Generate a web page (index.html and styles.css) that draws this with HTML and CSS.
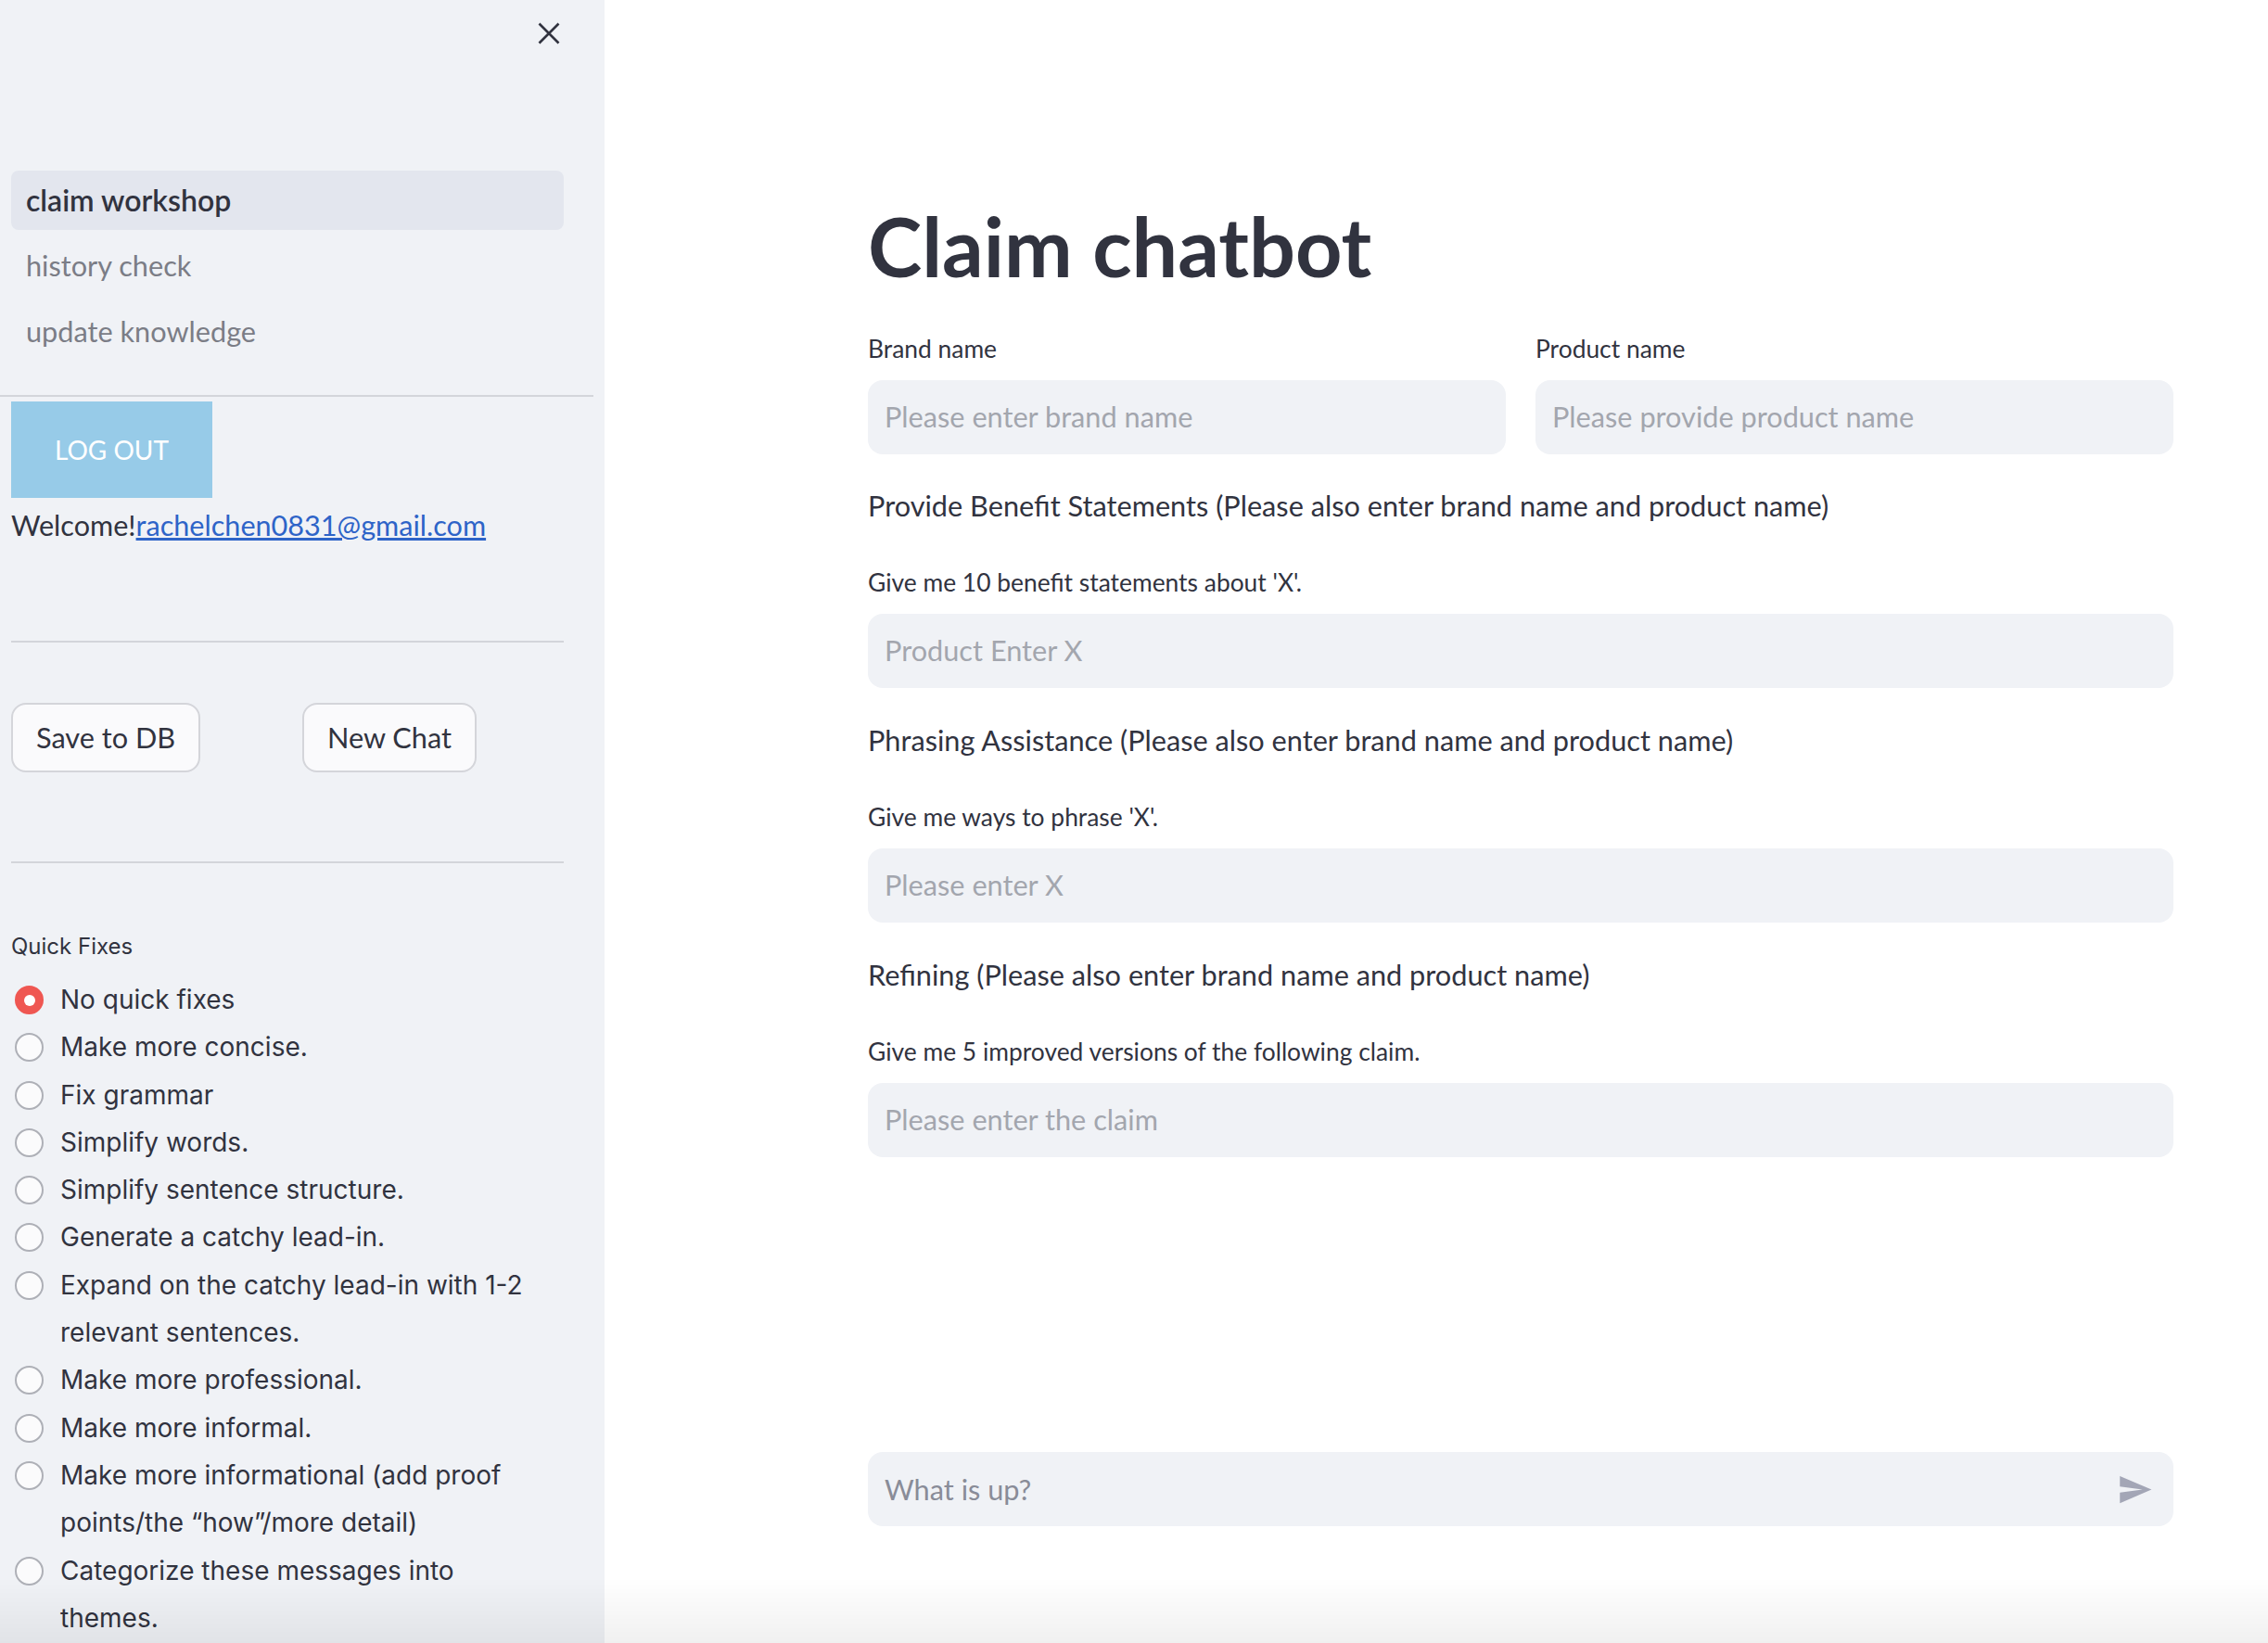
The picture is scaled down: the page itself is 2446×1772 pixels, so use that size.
FILE: index.html
```html
<!DOCTYPE html>
<html lang="en">
<head>
<meta charset="utf-8">
<title>Claim chatbot</title>
<link rel="stylesheet" href="styles.css">
</head>
<body>
<div class="app">
  <aside class="sidebar">
    <div class="sb-top">
      <button class="close" aria-label="Close sidebar">
        <svg width="24" height="24" viewBox="0 0 24 24"><path d="M1.5 1.5 L22.5 22.5 M22.5 1.5 L1.5 22.5" stroke="#31333f" stroke-width="2.6" fill="none"/></svg>
      </button>
    </div>
    <nav class="nav">
      <a class="nav-item active" href="#">claim workshop</a>
      <a class="nav-item" href="#">history check</a>
      <a class="nav-item" href="#">update knowledge</a>
    </nav>
    <hr class="rule-full">
    <div class="sb-body">
      <button class="logout">LOG OUT</button>
      <p class="welcome">Welcome!<a href="#">rachelchen0831@gmail.com</a></p>
      <hr class="rule rule-2">
      <div class="btn-row">
        <div class="col"><button class="btn">Save to DB</button></div>
        <div class="col"><button class="btn">New Chat</button></div>
      </div>
      <hr class="rule rule-3">
      <div class="radio-group">
        <div class="radio-title">Quick Fixes</div>
        <div class="radios">
          <label class="radio checked"><span class="circle"></span><span class="txt">No quick fixes</span></label>
          <label class="radio"><span class="circle"></span><span class="txt">Make more concise.</span></label>
          <label class="radio"><span class="circle"></span><span class="txt">Fix grammar</span></label>
          <label class="radio"><span class="circle"></span><span class="txt">Simplify words.</span></label>
          <label class="radio"><span class="circle"></span><span class="txt">Simplify sentence structure.</span></label>
          <label class="radio"><span class="circle"></span><span class="txt">Generate a catchy lead-in.</span></label>
          <label class="radio"><span class="circle"></span><span class="txt">Expand on the catchy lead-in with 1-2 relevant sentences.</span></label>
          <label class="radio"><span class="circle"></span><span class="txt">Make more professional.</span></label>
          <label class="radio"><span class="circle"></span><span class="txt">Make more informal.</span></label>
          <label class="radio"><span class="circle"></span><span class="txt">Make more informational (add proof points/the “how”/more detail)</span></label>
          <label class="radio"><span class="circle"></span><span class="txt">Categorize these messages into themes.</span></label>
        </div>
      </div>
    </div>
  </aside>
  <main class="main">
    <h1 class="title">Claim chatbot</h1>
    <div class="fields">
      <div class="field">
        <label class="field-label">Brand name</label>
        <input class="input" type="text" placeholder="Please enter brand name">
      </div>
      <div class="field">
        <label class="field-label">Product name</label>
        <input class="input" type="text" placeholder="Please provide product name">
      </div>
    </div>
    <section class="block">
      <p class="heading">Provide Benefit Statements (Please also enter brand name and product name)</p>
      <label class="field-label">Give me 10 benefit statements about 'X'.</label>
      <input class="input" type="text" placeholder="Product Enter X">
    </section>
    <section class="block">
      <p class="heading">Phrasing Assistance (Please also enter brand name and product name)</p>
      <label class="field-label">Give me ways to phrase 'X'.</label>
      <input class="input" type="text" placeholder="Please enter X">
    </section>
    <section class="block">
      <p class="heading">Refining (Please also enter brand name and product name)</p>
      <label class="field-label">Give me 5 improved versions of the following claim.</label>
      <input class="input" type="text" placeholder="Please enter the claim">
    </section>
    <div class="chat">
      <div class="chat-box">
        <input class="chat-input" type="text" placeholder="What is up?">
        <svg class="send" width="39" height="39" viewBox="0 0 24 24"><path d="M2.01 21L23 12 2.01 3 2 10l15 2-15 2z" fill="#a3a6b6"/></svg>
      </div>
    </div>
  </main>
</div>
<div class="fade"></div>
</body>
</html>
```
FILE: styles.css
```css
* { box-sizing: border-box; }
html, body {
  margin: 0;
  padding: 0;
  width: 2446px;
  height: 1772px;
  overflow: hidden;
}
body {
  font-family: Lato, "Liberation Sans", sans-serif;
  color: #31333f;
  background: #ffffff;
}
.app {
  display: flex;
  height: 1772px;
}

/* Sidebar */
.sidebar {
  width: 652px;
  flex: none;
  background: #f0f2f6;
  display: flex;
  flex-direction: column;
  overflow: hidden;
}
.sb-top {
  height: 72px;
  display: flex;
  align-items: center;
  justify-content: flex-end;
  padding-right: 48px;
}
.close {
  width: 24px;
  height: 24px;
  padding: 0;
  border: 0;
  background: none;
  display: flex;
}
.nav {
  margin-top: 112px;
  padding: 0 44px 0 12px;
  display: flex;
  flex-direction: column;
  gap: 7px;
}
.nav-item {
  height: 64px;
  line-height: 64px;
  padding-left: 16px;
  border-radius: 8px;
  font-size: 30.7px;
  color: #7b7d86;
  text-decoration: none;
}
.nav-item.active {
  background: #e3e6ee;
  color: #31333f;
  font-weight: 600;
  font-size: 32px;
}
.rule-full {
  margin: 36px 12px 0 0;
  height: 2px;
  border: 0;
  background: #d3d5da;
}
.sb-body {
  padding: 0 44px 0 12px;
}
.logout {
  display: block;
  margin-top: 5px;
  width: 217px;
  height: 104px;
  border: 0;
  background: #97cbe8;
  color: #ffffff;
  font-family: Lato, "Liberation Sans", sans-serif;
  font-size: 28px;
}
.welcome {
  margin: 4px 0 0;
  font-size: 30.6px;
  line-height: 51px;
}
.welcome a {
  color: #2e64c8;
  text-decoration: underline;
}
.rule {
  height: 2px;
  border: 0;
  background: #d3d5da;
}
.rule-2 { margin: 99px 0 0; }
.rule-3 { margin: 96px 0 0; }
.btn-row {
  margin-top: 65px;
  display: grid;
  grid-template-columns: 1fr 1fr;
  gap: 32px;
}
.btn {
  height: 75px;
  padding: 0 25px;
  border: 2px solid #d4d5da;
  border-radius: 16px;
  background: #fafafc;
  color: #31333f;
  font-family: Lato, "Liberation Sans", sans-serif;
  font-size: 30.7px;
}
.radio-group {
  margin-top: 70px;
}
.radio-title {
  font-family: Inter, "Noto Sans", sans-serif;
  font-size: 24px;
  line-height: 40px;
}
.radios {
  margin-top: 12px;
  display: flex;
  flex-direction: column;
}
.radio {
  display: flex;
  align-items: flex-start;
  gap: 18px;
  padding-left: 4px;
  font-family: Inter, "Noto Sans", sans-serif;
  font-size: 28px;
  line-height: 51.3px;
}
.txt {
  max-width: 520px;
}
.circle {
  flex: none;
  width: 31px;
  height: 31px;
  margin-top: 10px;
  border-radius: 50%;
  border: 2px solid #aeb0b7;
  background: #fbfbfc;
}
.radio.checked .circle {
  background: #ef5752;
  border-color: #ef5752;
  display: flex;
  align-items: center;
  justify-content: center;
}
.radio.checked .circle::after {
  content: "";
  width: 12px;
  height: 12px;
  border-radius: 50%;
  background: #ffffff;
}

/* Main */
.main {
  flex: 1;
  display: flex;
  flex-direction: column;
  padding: 213px 102px 126px 284px;
}
.title {
  margin: 0;
  font-size: 88px;
  line-height: 1.2;
  font-weight: 700;
}
.fields {
  margin-top: 37px;
  display: grid;
  grid-template-columns: 1fr 1fr;
  gap: 32px;
}
.field-label {
  display: block;
  font-size: 26.4px;
  line-height: 40px;
}
.input {
  display: block;
  width: 100%;
  height: 80px;
  margin-top: 14px;
  padding: 0 18px;
  border: 0;
  border-radius: 16px;
  background: #f0f2f6;
  color: #31333f;
  font-family: Lato, "Liberation Sans", sans-serif;
  font-size: 30.7px;
  outline: none;
}
.input::placeholder { color: #a3a6ae; }
.block { margin-top: 30px; }
.block + .block { margin-top: 31px; }
.heading {
  margin: 0;
  font-size: 30.7px;
  line-height: 51px;
}
.block .field-label { margin-top: 37px; }
.block .input { margin-top: 14px; }
.chat { margin-top: auto; }
.chat-box {
  height: 80px;
  border-radius: 16px;
  background: #f0f2f6;
  display: flex;
  align-items: center;
  padding: 0 22px 0 18px;
}
.chat-input {
  flex: 1;
  height: 100%;
  padding: 0;
  border: 0;
  background: transparent;
  color: #31333f;
  font-family: Lato, "Liberation Sans", sans-serif;
  font-size: 30.7px;
  outline: none;
}
.chat-input::placeholder { color: #898c98; }
.send { flex: none; }

.fade {
  position: fixed;
  left: 0;
  right: 0;
  bottom: 0;
  height: 70px;
  background: linear-gradient(rgba(0, 0, 0, 0), rgba(0, 0, 0, 0.06));
  pointer-events: none;
}
```
